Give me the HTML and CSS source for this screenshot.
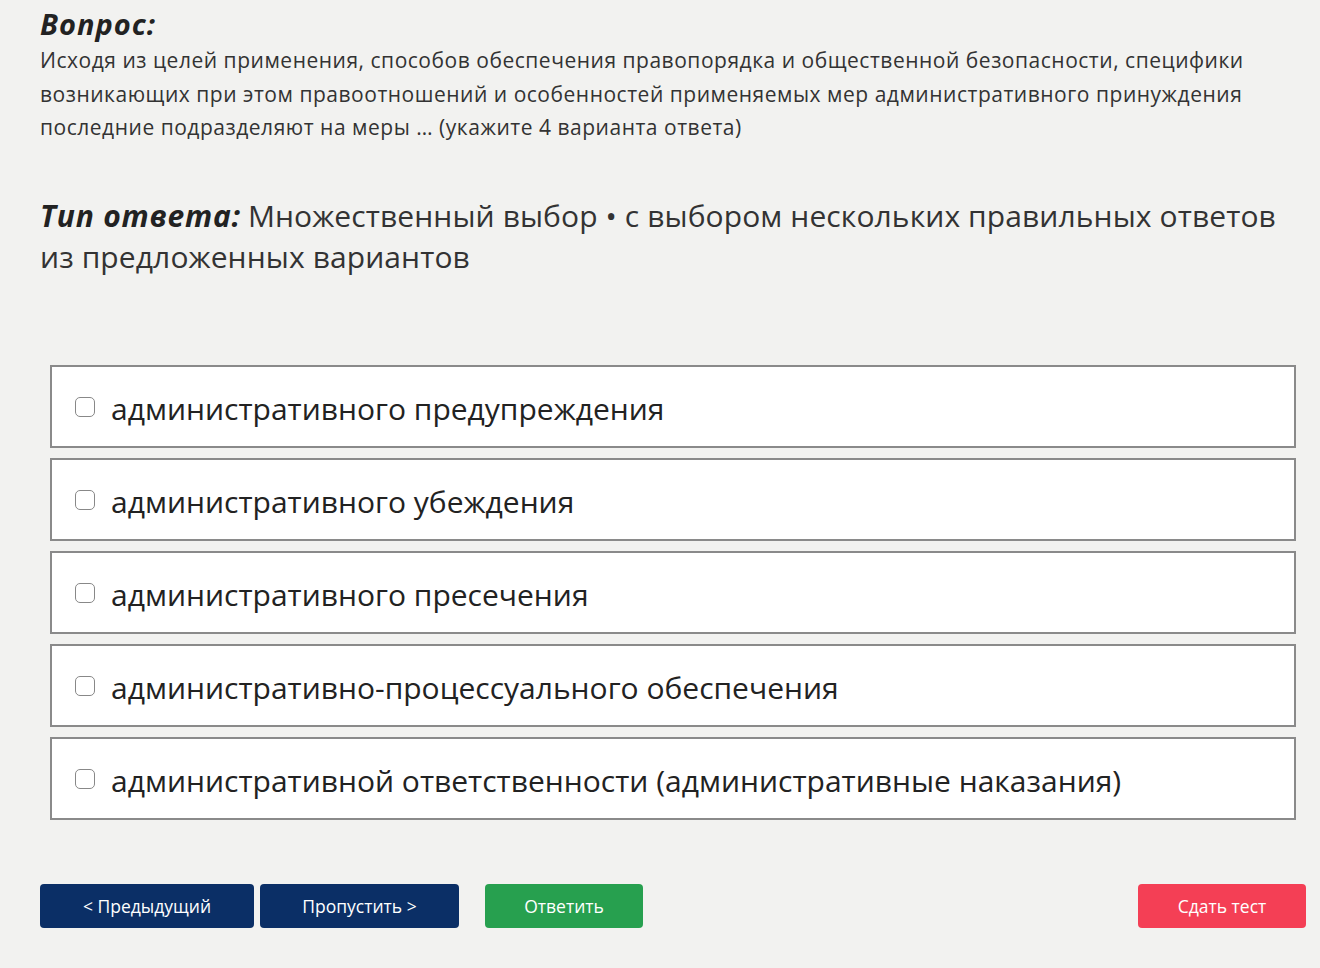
FILE: index.html
```html
<!DOCTYPE html>
<html lang="ru">
<head>
  <meta charset="UTF-8" />
  <title>Тест</title>
  <link rel="stylesheet" href="styles.css">
</head>
<body>
  <div class="test">
    <div class="vopros">
      <h2>Вопрос:</h2>
      <p>Исходя из целей применения, способов обеспечения правопорядка и общественной безопасности, специфики возникающих при этом правоотношений и особенностей применяемых мер административного принуждения последние подразделяют на меры … (укажите 4 варианта ответа)</p>
    </div>

    <div class="tip">
      <b>Тип ответа:</b><span>Множественный выбор • с выбором нескольких правильных ответов из предложенных вариантов</span>
    </div>

    <div class="otvety">
      <label class="otvet"><input type="checkbox"> административного предупреждения</label>
      <label class="otvet"><input type="checkbox"> административного убеждения</label>
      <label class="otvet"><input type="checkbox"> административного пресечения</label>
      <label class="otvet"><input type="checkbox"> административно-процессуального обеспечения</label>
      <label class="otvet"><input type="checkbox"> административной ответственности (административные наказания)</label>
    </div>

    <div class="knopki">
      <button class="btn btn-nav">&lt; Предыдущий</button>
      <button class="btn btn-nav btn-skip">Пропустить &gt;</button>
      <button class="btn btn-otvet">Ответить</button>
      <button class="btn btn-sdat">Сдать тест</button>
    </div>
  </div>
</body>
</html>
```

FILE: styles.css
```css
/* ===== Base ===== */
* { margin:0; padding:0; box-sizing:border-box; }
body {
  background:#f2f2f0;
  color:#222;
  font-family:"Open Sans", "Noto Sans", sans-serif;
}

.test { padding:5px 14px 0 40px; }

/* ===== Вопрос ===== */
.vopros h2 {
  font-size:29px; font-style:italic; font-weight:700;
  line-height:38px; letter-spacing:1px;
}
.vopros p {
  margin-top:1px;
  font-size:21px; line-height:33.5px; letter-spacing:0.52px;
  color:#333;
}

/* ===== Тип ответа ===== */
.tip {
  margin-top:50px;
  font-size:30px; line-height:41px; letter-spacing:0.1px;
  color:#333;
}
.tip b {
  display:inline-block; margin-right:7px;
  font-style:italic; color:#222; letter-spacing:0.8px;
}

/* ===== Варианты ===== */
.otvety {
  display:flex; flex-direction:column; gap:10px;
  margin:88px 10px 0 10px;
}
.otvet {
  display:flex; align-items:center; gap:16px;
  height:83px; padding:4px 0 0 23px;
  background:#fff; border:2px solid #8a8a8a;
  font-size:30px; color:#222;
  cursor:pointer;
}
.otvet input {
  appearance:none; -webkit-appearance:none;
  width:20px; height:20px; margin-bottom:3px;
  border:1.5px solid #888; border-radius:5px;
  background:#fff; flex:none;
}

/* ===== Кнопки ===== */
.knopki {
  display:flex; align-items:center;
  margin-top:64px;
}
.btn {
  height:44px; border:none; border-radius:4px;
  font-family:inherit; font-size:17.5px; color:#fff;
  cursor:pointer;
}
.btn-nav { background:#0b2f66; width:214px; }
.btn-skip { width:199px; margin-left:6px; }
.btn-otvet { background:#27a04f; width:158px; margin-left:26px; }
.btn-sdat { background:#f43f55; width:168px; margin-left:auto; }
```
